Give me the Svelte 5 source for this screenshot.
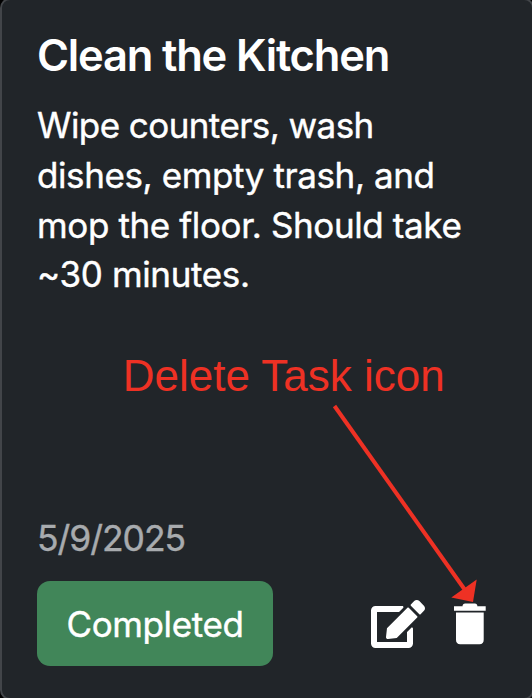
<script>
  const task = {
    title: 'Clean the Kitchen',
    lines: [
      { text: 'Wipe counters, wash', tracking: -0.57 },
      { text: 'dishes, empty trash, and', tracking: -0.4 },
      { text: 'mop the floor. Should take', tracking: -0.38 },
      { text: '~30 minutes.', tracking: -0.35 }
    ],
    date: '5/9/2025'
  };
</script>

<main>
  <article class="card">
    <h2>{task.title}</h2>
    <p class="description">
      {#each task.lines as line}
        <span style="letter-spacing: {line.tracking}px">{line.text}</span>
      {/each}
    </p>
    <time>{task.date}</time>
    <footer>
      <button class="status">Completed</button>
      <div class="actions">
        <button class="icon" aria-label="Edit task">
          <svg width="54" height="48" viewBox="0 0 576 512" fill="#fff"><path d="M402.6 83.2l90.2 90.2c3.8 3.8 3.8 10 0 13.8L274.4 405.6l-92.8 10.3c-12.4 1.4-22.9-9.1-21.5-21.5l10.3-92.8L388.8 83.2c3.8-3.8 10-3.8 13.8 0zm162-22.9l-48.8-48.8c-15.2-15.2-39.9-15.2-55.2 0l-35.4 35.4c-3.8 3.8-3.8 10 0 13.8l90.2 90.2c3.8 3.8 10 3.8 13.8 0l35.4-35.4c15.2-15.3 15.2-40 0-55.2zM384 346.2V448H64V128h229.8c3.2 0 6.2-1.3 8.5-3.5l40-40c7.6-7.6 2.2-20.5-8.5-20.5H48C21.5 64 0 85.5 0 112v352c0 26.5 21.5 48 48 48h352c26.5 0 48-21.5 48-48V306.2c0-10.7-12.9-16-20.5-8.5l-40 40c-2.2 2.3-3.5 5.3-3.5 8.5z" /></svg>
        </button>
        <button class="icon" aria-label="Delete task">
          <svg width="32" height="48" viewBox="0 0 32 48" fill="#fff">
            <path d="M0 6.2H8.6V5.2Q9.2 3.6 11 3.6H21Q22.8 3.6 23.3 5.2V6.2H31.7V10.8H0ZM2 12.4H29.7V39.8Q29.7 44.2 25.5 44.2H6.2Q2 44.2 2 39.8Z" />
          </svg>
        </button>
      </div>
    </footer>
  </article>
  <div class="callout">Delete Task icon</div>
  <svg class="arrow" width="532" height="698" viewBox="0 0 532 698">
    <path d="M334.5 406L465 590" stroke="#ee3124" stroke-width="4" />
    <path d="M476.7 579.5L473 602L451.3 597.5Z" fill="#ee3124" />
  </svg>
</main>

<style>
  :global(body) {
    background: #000;
  }

  main {
    position: relative;
    width: 532px;
    height: 698px;
    overflow: hidden;
    font-family: Inter, "Liberation Sans", sans-serif;
    color: #fff;
  }

  .card {
    box-sizing: border-box;
    width: 534px;
    height: 702px;
    margin-top: -2px;
    padding: 30px 46px 32px 35px;
    border: 2px solid #424549;
    border-radius: 10px;
    background: #212529;
    display: flex;
    flex-direction: column;
  }

  h2 {
    margin: 0;
    font-size: 43.5px;
    line-height: 50px;
    font-weight: 600;
    letter-spacing: -1.2px;
    white-space: nowrap;
  }

  .description {
    margin: 21px 0 0;
    font-size: 35px;
    line-height: 49.8px;
    -webkit-text-stroke: 0.4px currentColor;
  }

  .description span {
    display: block;
    white-space: nowrap;
  }

  time {
    margin-top: auto;
    font-size: 35.5px;
    line-height: 50px;
    letter-spacing: -1.05px;
    -webkit-text-stroke: 0.4px currentColor;
    color: #a8abae;
  }

  footer {
    display: flex;
    align-items: center;
    justify-content: space-between;
    margin-top: 17px;
  }

  button {
    border: 0;
    color: inherit;
    font-family: inherit;
  }

  .status {
    width: 236px;
    height: 85px;
    padding: 0;
    border-radius: 13px;
    background: #418659;
    font-size: 35px;
    letter-spacing: -0.4px;
    -webkit-text-stroke: 0.4px currentColor;
  }

  .actions {
    display: flex;
    gap: 29px;
  }

  .icon {
    padding: 0;
    background: none;
  }

  .icon svg {
    display: block;
  }

  .callout {
    position: absolute;
    left: 122.7px;
    top: 351px;
    font: 44px/50px "Liberation Sans", Arial, sans-serif;
    color: #ee3124;
    white-space: nowrap;
  }

  .arrow {
    position: absolute;
    inset: 0;
    pointer-events: none;
  }
</style>
